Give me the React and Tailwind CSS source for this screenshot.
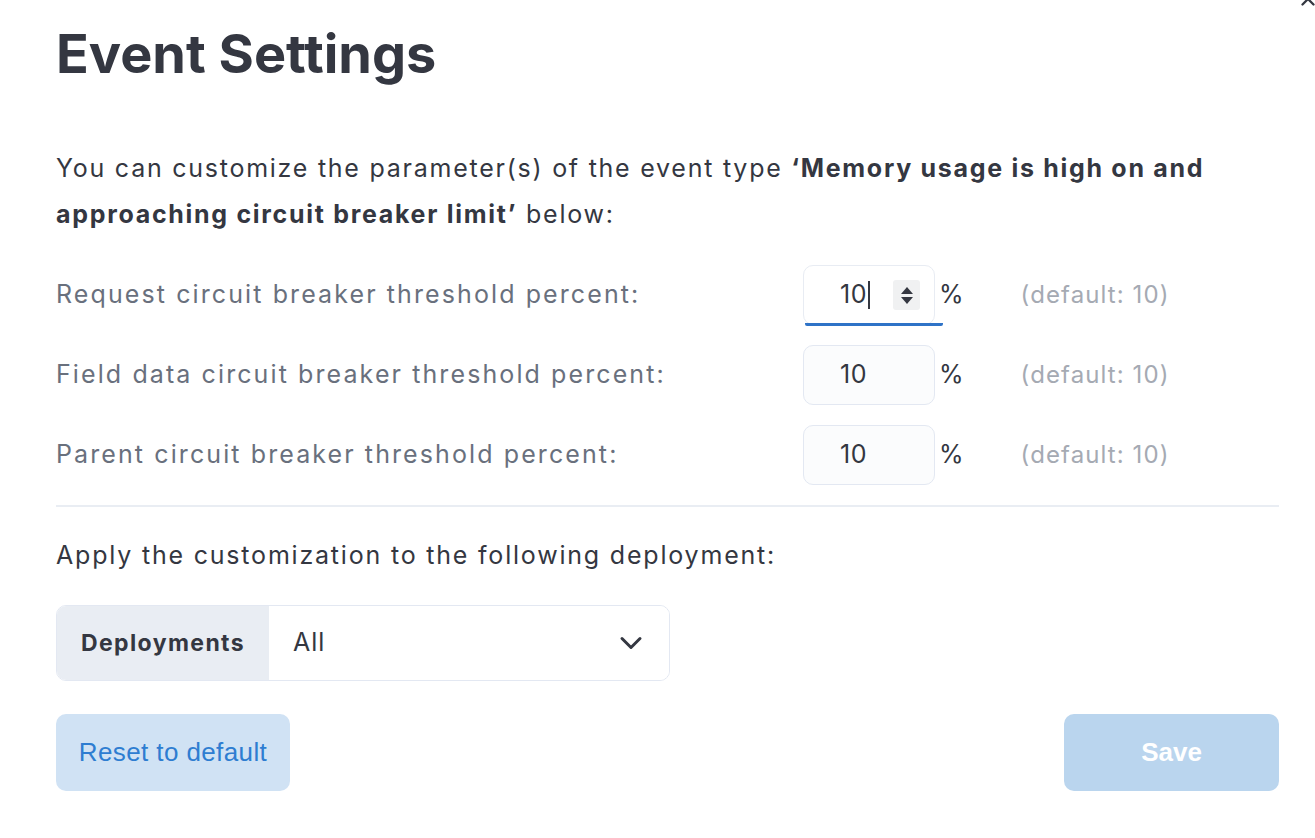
import React from 'react';
import { ChevronDown, X } from 'lucide-react';

const rows = [
  { label: 'Request circuit breaker threshold percent:', focused: true },
  { label: 'Field data circuit breaker threshold percent:' },
  { label: 'Parent circuit breaker threshold percent:' },
];

function Spinner() {
  return (
    <div className="w-[27px] h-[30px] bg-[#f0f1f2] rounded-[3px] flex flex-col items-center justify-center gap-[3px]">
      <svg width="12" height="7" viewBox="0 0 12 7"><path d="M6 0 L12 7 L0 7 Z" fill="#343741" /></svg>
      <svg width="12" height="7" viewBox="0 0 12 7"><path d="M0 0 L12 0 L6 7 Z" fill="#343741" /></svg>
    </div>
  );
}

export default function App() {
  return (
    <div className="relative w-[1315px] h-[838px] bg-white overflow-hidden font-['Inter',sans-serif] text-[#343741]">
      <X size={22} strokeWidth={2.5} className="absolute right-[-4px] top-[-12px] text-[#343741]" />

      <div className="pl-[56px] pr-[36px] pt-[23px]">
        <h1 className="text-[54px] leading-[62px] font-bold text-[#343741]">Event Settings</h1>

        <p className="mt-[60px] text-[25px] leading-[46px] text-[#343741] tracking-[1.75px]">
          You can customize the parameter(s) of the event type <b className="font-bold tracking-[1.7px]">‘Memory usage is high on and approaching circuit breaker limit’</b> below:
        </p>

        <div className="mt-[28px] flex flex-col gap-[20px]">
          {rows.map((r) => (
            <div key={r.label} className="flex items-center h-[60px]">
              <div className="w-[747px] text-[25px] text-[#69707d] tracking-[2.1px]">{r.label}</div>
              <div
                className={
                  'relative w-[132px] h-[60px] rounded-[10px] border flex items-center pl-[36px] pr-[14px] ' +
                  (r.focused ? 'bg-white border-[#e8ecf3]' : 'bg-[#fbfcfd] border-[#e3e8f2]')
                }
              >
                <span className="text-[25px] tracking-[0.5px] text-[#343741]">10</span>
                {r.focused && (
                  <>
                    <span className="w-[2px] h-[28px] bg-[#343741] ml-[1px]" />
                    <div className="ml-auto"><Spinner /></div>
                    <div className="absolute left-[1px] bottom-[-2px] w-[138px] h-[3px] bg-[#2f73c7] rounded-b-[2px]" />
                  </>
                )}
              </div>
              <span className="ml-[4px] text-[25px] text-[#343741]">%</span>
              <span className="ml-[57px] text-[24px] text-[#a5aab3] tracking-[1.1px]">(default: 10)</span>
            </div>
          ))}
        </div>

        <div className="mt-[20px] h-[2px] bg-[#e9edf3]" />

        <p className="mt-[25px] text-[25px] leading-[46px] text-[#343741] tracking-[1.8px]">
          Apply the customization to the following deployment:
        </p>

        <div className="mt-[27px] w-[614px] h-[76px] flex rounded-[10px] border border-[#e3e8f2] overflow-hidden">
          <div className="w-[212px] bg-[#e9edf3] flex items-center justify-center text-[23px] tracking-[1.4px] font-bold text-[#343741]">
            Deployments
          </div>
          <div className="flex-1 bg-white flex items-center pl-[24px] pr-[20px]">
            <span className="text-[25px] tracking-[1px] text-[#343741]">All</span>
            <ChevronDown size={36} strokeWidth={2} className="ml-auto text-[#343741]" />
          </div>
        </div>

        <div className="mt-[33px] flex justify-between">
          <button className="w-[234px] h-[77px] rounded-[10px] bg-[#d0e2f4] text-[#2e7dd1] text-[26px] tracking-[0.4px] font-['Liberation_Sans',Arial,sans-serif]">
            Reset to default
          </button>
          <button className="w-[215px] h-[77px] rounded-[10px] bg-[#bad5ee] text-white text-[26px] font-bold font-['Liberation_Sans',Arial,sans-serif]">
            Save
          </button>
        </div>
      </div>
    </div>
  );
}
